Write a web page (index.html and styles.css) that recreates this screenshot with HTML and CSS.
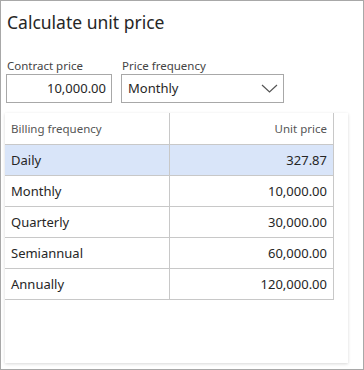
FILE: index.html
```html
<!DOCTYPE html>
<html lang="en">
<head>
  <meta charset="UTF-8">
  <title>Calculate unit price</title>
  <link rel="stylesheet" href="styles.css">
</head>
<body>
  <div class="dialog">
    <h1>Calculate unit price</h1>

    <div class="fields">
      <div class="field">
        <label for="contract">Contract price</label>
        <div class="input num" id="contract">10,000.00</div>
      </div>
      <div class="field">
        <label for="freq">Price frequency</label>
        <div class="input select" id="freq">
          <span>Monthly</span>
          <svg width="17" height="9" viewBox="0 0 17 9"><path d="M1 1l7.5 7L16 1" fill="none" stroke="#555" stroke-width="1.2"/></svg>
        </div>
      </div>
    </div>

    <div class="grid-panel">
      <table class="grid">
        <thead>
          <tr><th>Billing frequency</th><th class="num">Unit price</th></tr>
        </thead>
        <tbody>
          <tr class="selected"><td>Daily</td><td class="num">327.87</td></tr>
          <tr><td>Monthly</td><td class="num">10,000.00</td></tr>
          <tr><td>Quarterly</td><td class="num">30,000.00</td></tr>
          <tr><td>Semiannual</td><td class="num">60,000.00</td></tr>
          <tr><td>Annually</td><td class="num">120,000.00</td></tr>
        </tbody>
      </table>
    </div>
  </div>
</body>
</html>
```

FILE: styles.css
```css
body { margin: 0; font-family: "Noto Sans", "Open Sans", sans-serif; color: #333; }
.dialog { width: 364px; height: 370px; box-sizing: border-box; border: 1px solid #a8a8a8; padding: 0 4px 0 4px; background: #fff; }
h1 { font-size: 17.5px; font-weight: normal; margin: 8px 0 0 2px; line-height: 26px; color: #262626; }
.fields { display: flex; gap: 9px; margin-top: 23px; padding-left: 1px; }
.field { display: flex; flex-direction: column; }
.field label { font-size: 11.5px; color: #444; line-height: 16px; padding-left: 1px; }
.input { height: 29px; box-sizing: border-box; border: 1px solid #a8a8a8; font-size: 13px; line-height: 27px; padding: 0 5px; color: #262626; }
.input.num { width: 106px; text-align: right; }
.input.select { width: 163px; display: flex; justify-content: space-between; align-items: center; padding: 0 5px 0 6px; }
.grid-panel { margin-top: 10px; width: 343px; height: 250px; box-shadow: 0 1px 3px rgba(0,0,0,0.16); }
.grid { border-collapse: collapse; width: 329px; font-size: 13px; }
.grid th { font-size: 11.5px; font-weight: normal; color: #555; text-align: left; height: 31px; padding: 0 6px; border-right: 1px solid #c8c8c8; }
.grid td { height: 30px; padding: 0 6px; border: 1px solid #c8c8c8; border-left: none; color: #262626; }
.grid th:first-child { width: 152px; }
.grid .num { text-align: right; }
.grid tr.selected td { background: #d9e5f9; }
```
